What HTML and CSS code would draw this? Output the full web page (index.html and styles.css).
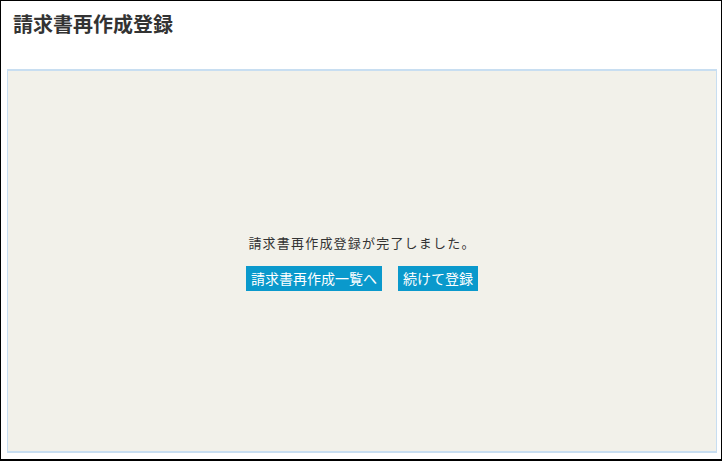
FILE: index.html
```html
<!DOCTYPE html>
<html lang="ja">
<head>
<meta charset="utf-8">
<link rel="stylesheet" href="styles.css">
</head>
<body>
<div class="page">
  <header class="header">
    <h1 class="title">請求書再作成登録</h1>
  </header>
  <main class="panel">
    <div class="result">
      <p class="message">請求書再作成登録が完了しました。</p>
      <div class="actions">
        <a class="btn">請求書再作成一覧へ</a>
        <a class="btn">続けて登録</a>
      </div>
    </div>
  </main>
</div>
</body>
</html>
```
FILE: styles.css
```css
html, body {
  margin: 0;
  padding: 0;
  background: #ffffff;
}
.page {
  box-sizing: border-box;
  width: 722px;
  height: 461px;
  border: 1px solid #000;
  border-bottom-width: 2px;
  display: flex;
  flex-direction: column;
  font-family: "Noto Sans CJK JP", "Noto Sans", sans-serif;
  color: #333;
}
.header {
  height: 68px;
  padding: 0 0 0 12px;
  box-sizing: border-box;
}
.title {
  margin: 0;
  padding-top: 10px;
  font-size: 20px;
  font-weight: bold;
  line-height: 26px;
  color: #333;
}
.panel {
  flex: 1;
  margin: 0 4px 6px 6px;
  background: #f2f1ea;
  border: 2px solid #c8def1;
  border-width: 2px 1px 2px 1px;
  display: flex;
  align-items: center;
  justify-content: center;
}
.result {
  display: flex;
  flex-direction: column;
  align-items: center;
  margin-top: 2px;
}
.message {
  margin: 0 0 14px 0;
  font-size: 13px;
  line-height: 18px;
  letter-spacing: 1.2px;
  color: #333;
}
.actions {
  display: flex;
  gap: 16px;
}
.btn {
  display: block;
  background: #0a99cc;
  color: #fff;
  font-size: 14px;
  line-height: 25px;
  padding: 0 5px;
}
```
